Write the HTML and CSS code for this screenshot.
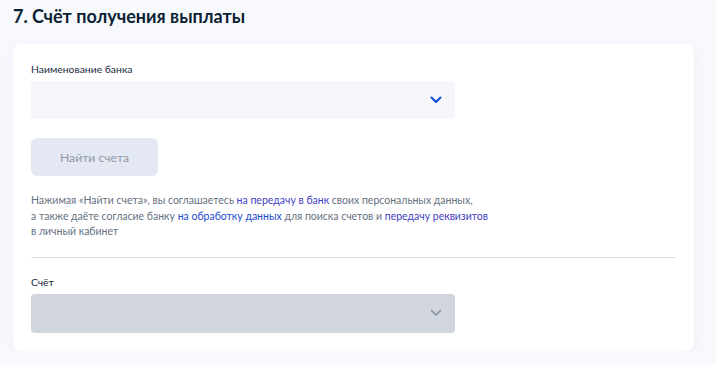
FILE: index.html
```html
<!DOCTYPE html>
<html lang="ru">
<head>
<meta charset="utf-8">
<link rel="stylesheet" href="styles.css">
</head>
<body>
<div class="page">
  <h2 class="title">7. Счёт получения выплаты</h2>
  <div class="card">
    <div class="field">
      <div class="label">Наименование банка</div>
      <div class="select">
        <svg class="chev" width="12" height="8" viewBox="0 0 12 8"><path d="M1.5 1.5 L6 6 L10.5 1.5" fill="none" stroke="#0d4cd3" stroke-width="2" stroke-linecap="round" stroke-linejoin="round"/></svg>
      </div>
    </div>
    <button class="btn">Найти счета</button>
    <p class="note">Нажимая «Найти счета», вы соглашаетесь <a class="lnk v">на передачу в банк</a> своих персональных данных,<br>а также даёте согласие банку <a class="lnk">на обработку данных</a> для поиска счетов и <a class="lnk v">передачу реквизитов</a><br>в личный кабинет</p>
    <hr class="divider">
    <div class="field">
      <div class="label">Счёт</div>
      <div class="select disabled">
        <svg class="chev" width="12" height="8" viewBox="0 0 12 8"><path d="M1.5 1.5 L6 6 L10.5 1.5" fill="none" stroke="#868fa0" stroke-width="1.5" stroke-linecap="round" stroke-linejoin="round"/></svg>
      </div>
    </div>
  </div>
</div>
</body>
</html>
```
FILE: styles.css
```css
html, body {
  margin: 0;
  padding: 0;
  background: #f8f9fd;
  font-family: Lato, "Noto Sans", sans-serif;
}
.page {
  padding: 4px 22px 0 13px;
}
.title {
  margin: 0;
  font-size: 18px;
  line-height: 24px;
  font-weight: 700;
  color: #0b1f33;
}
.card {
  margin-top: 16px;
  background: #fff;
  border-radius: 8px;
  box-shadow: 0 4px 16px rgba(100, 120, 180, 0.07);
  padding: 18px 18px 18px 18px;
  height: 271px;
}
.label {
  font-size: 10.4px;
  line-height: 14px;
  color: #1a2b3d;
  margin-bottom: 5px;
}
.select {
  width: 424px;
  height: 38px;
  background: #f5f6fa;
  border-radius: 4px;
  display: flex;
  align-items: center;
  justify-content: flex-end;
  padding-right: 13px;
  box-sizing: border-box;
}
.select.disabled {
  background: #d0d5de;
  height: 39px;
}
.chev { display: block; }
.btn {
  margin-top: 19px;
  width: 127px;
  height: 38px;
  border: 0;
  border-radius: 6px;
  background: #e4e8f3;
  color: #8e98a7;
  font-family: Lato, "Noto Sans", sans-serif;
  font-size: 12.2px;
  display: block;
  padding: 0;
}
.note {
  margin: 17px 0 0;
  font-size: 10.5px;
  line-height: 15.5px;
  color: #66727f;
}
.lnk { color: #1d4cd0; text-decoration: none; }
.lnk.v { color: #3f3fc2; }
.divider {
  margin: 17px 0 0;
  border: 0;
  border-top: 1px solid #dedfe2;
  height: 0;
}
.divider + .field { margin-top: 17px; }
```
